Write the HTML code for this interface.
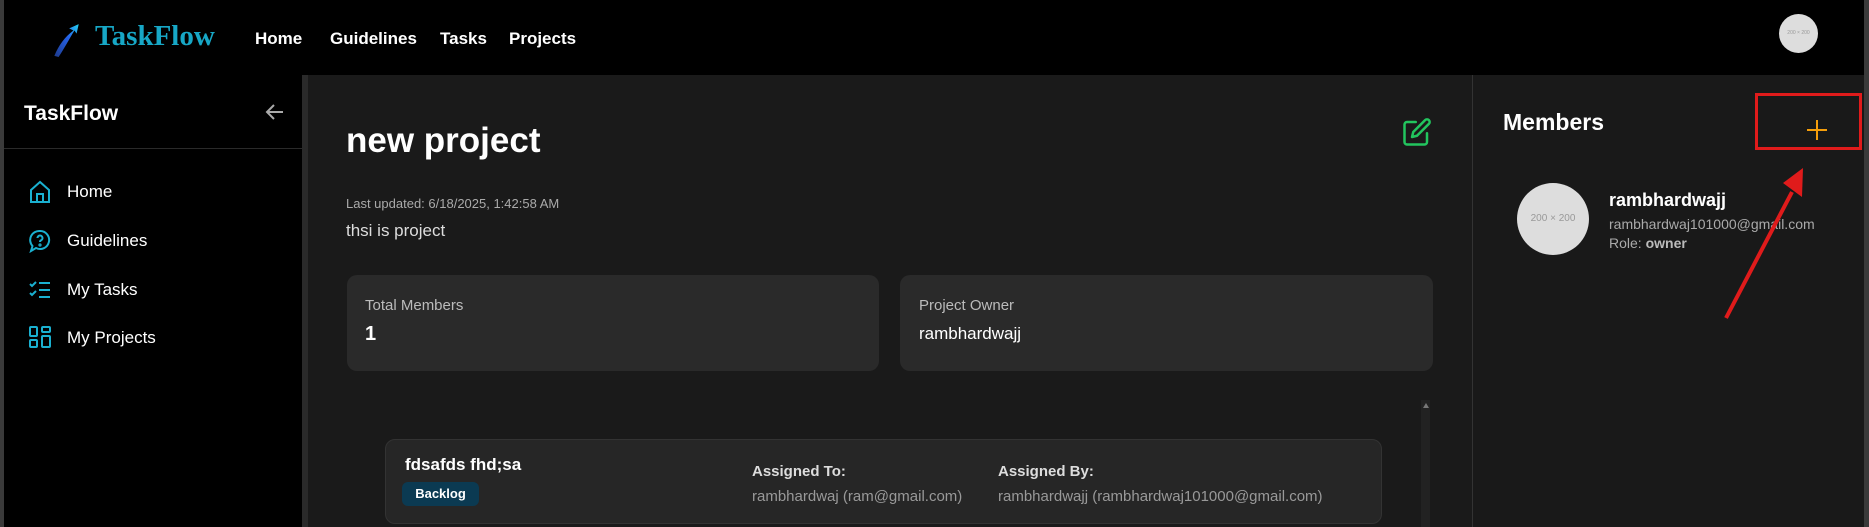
<!DOCTYPE html>
<html><head><meta charset="utf-8"><style>
*{margin:0;padding:0;box-sizing:border-box}
body{width:1869px;height:527px;overflow:hidden;background:#191919;font-family:"Liberation Sans",sans-serif;color:#fff;position:relative}
.a{position:absolute;white-space:nowrap}
</style></head><body>
<div class="a" style="left:0;top:0;width:1869px;height:75px;background:#000"></div>
<div class="a" style="left:0;top:0;width:4px;height:527px;background:#3a3a3a"></div>
<div class="a" style="left:1864px;top:0;width:5px;height:527px;background:#3a3a3a"></div>
<svg class="a" style="left:52px;top:22px" width="28" height="36" viewBox="0 0 26 34"><defs><linearGradient id="g" x1="0" y1="1" x2="1" y2="0"><stop offset="0" stop-color="#1e3a8a"/><stop offset="0.6" stop-color="#2563eb"/><stop offset="1" stop-color="#22d3ee"/></linearGradient></defs><path d="M2 32 C6 22 12 14 20 8 L16 6 L25 2 L23 11 L21 8 C16 16 12 24 6 33 Z" fill="url(#g)"/></svg>
<div class="a" style="left:95px;top:20px;font-family:'Liberation Serif',serif;font-weight:bold;font-size:29px;color:#17a7c6">TaskFlow</div>
<div class="a" style="left:255px;top:29px;font-size:17px;font-weight:bold">Home</div>
<div class="a" style="left:330px;top:29px;font-size:17px;font-weight:bold">Guidelines</div>
<div class="a" style="left:440px;top:29px;font-size:17px;font-weight:bold">Tasks</div>
<div class="a" style="left:509px;top:29px;font-size:17px;font-weight:bold">Projects</div>
<div class="a" style="left:1779px;top:14px;width:39px;height:39px;border-radius:50%;background:#ddd;color:#999;font-size:5px;text-align:center;line-height:39px">200 × 200</div>

<div class="a" style="left:4px;top:75px;width:298px;height:452px;background:#000"></div>
<div class="a" style="left:302px;top:75px;width:6px;height:452px;background:#2a2a2a"></div>
<div class="a" style="left:308px;top:75px;width:1164px;height:452px;background:#1a1a1a"></div>
<div class="a" style="left:1472px;top:75px;width:1px;height:452px;background:#333"></div>
<div class="a" style="left:24px;top:102px;font-size:21px;font-weight:bold">TaskFlow</div>
<svg class="a" style="left:265px;top:103px" width="20" height="18" viewBox="0 0 20 18"><path d="M18 9H3M9 2L2 9l7 7" stroke="#aaa" stroke-width="2" fill="none"/></svg>
<div class="a" style="left:4px;top:148px;width:298px;height:1px;background:#2a2a2a"></div>
<svg class="a" style="left:29px;top:180px" width="22" height="24" viewBox="0 0 22 24" fill="none" stroke="#1ab0d0" stroke-width="2"><path d="M2 10L11 2l9 8v12H2Z"/><path d="M8 22v-8h6v8"/></svg>
<div class="a" style="left:67px;top:182px;font-size:17px">Home</div>
<svg class="a" style="left:29px;top:229px" width="22" height="24" viewBox="0 0 22 24" fill="none" stroke="#1ab0d0" stroke-width="2"><path d="M11 2a9 9 0 1 1-4 17L2 22l1.5-5A9 9 0 0 1 11 2Z"/><path d="M8.5 9a2.5 2.5 0 1 1 3.5 2.3c-.8.4-1 1-1 1.7"/><circle cx="11" cy="16" r=".6"/></svg>
<div class="a" style="left:67px;top:231px;font-size:17px">Guidelines</div>
<svg class="a" style="left:29px;top:280px" width="22" height="20" viewBox="0 0 22 20" fill="none" stroke="#1ab0d0" stroke-width="2"><path d="M1 4l2 2 4-4M1 13l2 2 4-4M10 3h11M10 10h11M10 17h11"/></svg>
<div class="a" style="left:67px;top:280px;font-size:17px">My Tasks</div>
<svg class="a" style="left:29px;top:326px" width="22" height="22" viewBox="0 0 22 22" fill="none" stroke="#1ab0d0" stroke-width="2"><rect x="1" y="1" width="7" height="9" rx="1"/><rect x="13" y="1" width="8" height="5" rx="1"/><rect x="1" y="14" width="7" height="7" rx="1"/><rect x="13" y="10" width="8" height="11" rx="1"/></svg>
<div class="a" style="left:67px;top:328px;font-size:17px">My Projects</div>

<div class="a" style="left:346px;top:121px;font-size:35px;font-weight:bold">new project</div>
<svg class="a" style="left:1402px;top:117px" width="30" height="30" viewBox="0 0 24 24" fill="none" stroke="#22c55e" stroke-width="2" stroke-linecap="round" stroke-linejoin="round"><path d="M11 4H4a2 2 0 0 0-2 2v14a2 2 0 0 0 2 2h14a2 2 0 0 0 2-2v-7"/><path d="M18.5 2.5a2.1 2.1 0 0 1 3 3L12 15l-4 1 1-4Z"/></svg>
<div class="a" style="left:346px;top:196px;font-size:13px;color:#aaa">Last updated: 6/18/2025, 1:42:58 AM</div>
<div class="a" style="left:346px;top:221px;font-size:17px;color:#ddd">thsi is project</div>
<div class="a" style="left:347px;top:275px;width:532px;height:96px;background:#2a2a2a;border-radius:10px"></div>
<div class="a" style="left:365px;top:297px;font-size:15px;color:#bbb">Total Members</div>
<div class="a" style="left:365px;top:323px;font-size:20px;font-weight:bold">1</div>
<div class="a" style="left:900px;top:275px;width:533px;height:96px;background:#2a2a2a;border-radius:10px"></div>
<div class="a" style="left:919px;top:297px;font-size:15px;color:#bbb">Project Owner</div>
<div class="a" style="left:919px;top:324px;font-size:17px">rambhardwajj</div>
<div class="a" style="left:1421px;top:400px;width:9px;height:127px;background:#222"></div>
<div class="a" style="left:1423px;top:403px;width:0;height:0;border-left:3px solid transparent;border-right:3px solid transparent;border-bottom:5px solid #777"></div>
<div class="a" style="left:385px;top:439px;width:997px;height:85px;background:#262626;border:1px solid #333;border-radius:10px"></div>
<div class="a" style="left:405px;top:455px;font-size:17px;font-weight:bold">fdsafds fhd;sa</div>
<div class="a" style="left:402px;top:482px;width:77px;height:24px;background:#0b3a52;border-radius:6px;font-size:13px;font-weight:bold;text-align:center;line-height:24px">Backlog</div>
<div class="a" style="left:752px;top:463px;font-size:15px;font-weight:bold;color:#ddd">Assigned To:</div>
<div class="a" style="left:752px;top:488px;font-size:15px;color:#999">rambhardwaj (ram@gmail.com)</div>
<div class="a" style="left:998px;top:463px;font-size:15px;font-weight:bold;color:#ddd">Assigned By:</div>
<div class="a" style="left:998px;top:488px;font-size:15px;color:#999">rambhardwajj (rambhardwaj101000@gmail.com)</div>

<div class="a" style="left:1503px;top:109px;font-size:23px;font-weight:bold">Members</div>
<div class="a" style="left:1755px;top:93px;width:107px;height:57px;border:3px solid #e01b1b"></div>
<svg class="a" style="left:1807px;top:120px" width="20" height="20"><path d="M10 0v20M0 10h20" stroke="#f59e0b" stroke-width="2"/></svg>
<div class="a" style="left:1517px;top:183px;width:72px;height:72px;border-radius:50%;background:#ddd;color:#999;font-size:10px;text-align:center;line-height:72px">200 × 200</div>
<div class="a" style="left:1609px;top:190px;font-size:18px;font-weight:bold">rambhardwajj</div>
<div class="a" style="left:1609px;top:216px;font-size:14px;color:#aaa">rambhardwaj101000@gmail.com</div>
<div class="a" style="left:1609px;top:235px;font-size:14px;color:#aaa">Role: <b style="color:#bbb">owner</b></div>
<svg class="a" style="left:0;top:0" width="1869" height="527"><line x1="1726" y1="318" x2="1792" y2="192" stroke="#e01b1b" stroke-width="4"/><polygon points="1803,168 1783,183 1802,197" fill="#e01b1b"/></svg>
</body></html>
